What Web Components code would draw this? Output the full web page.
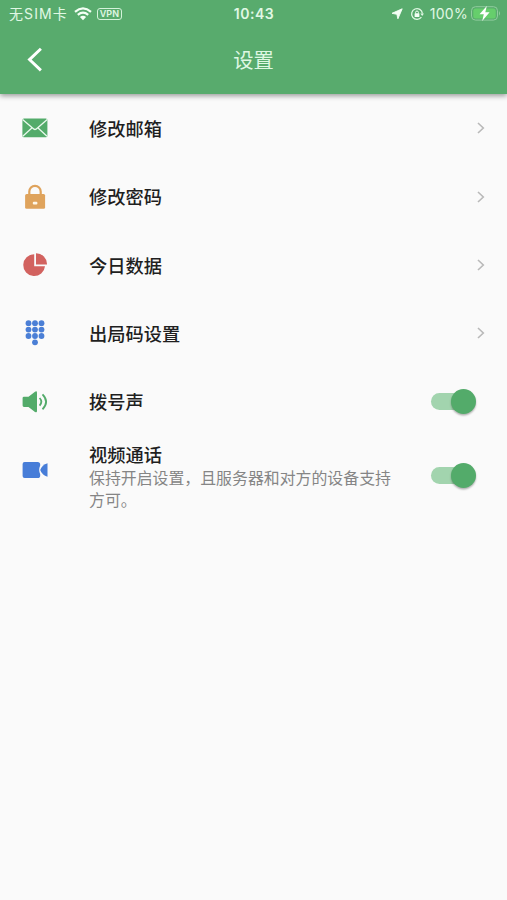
<!DOCTYPE html>
<html lang="zh-CN">
<head>
<meta charset="UTF-8">
<meta name="viewport" content="width=device-width, initial-scale=1">
<title>设置</title>
<style>
    body {
        margin: 0;
        background: #fafafa;
        font-family: Inter, "Noto Sans CJK SC", sans-serif;
    }
</style>
</head>
<body>
<settings-page>
    <status-bar slot="header" carrier="无SIM卡" time="10:43" battery="100%"></status-bar>
    <app-bar slot="header">设置</app-bar>

    <setting-item icon="mail">修改邮箱<nav-arrow slot="action"></nav-arrow></setting-item>
    <setting-item icon="lock">修改密码<nav-arrow slot="action"></nav-arrow></setting-item>
    <setting-item icon="pie">今日数据<nav-arrow slot="action"></nav-arrow></setting-item>
    <setting-item icon="dialpad">出局码设置<nav-arrow slot="action"></nav-arrow></setting-item>
    <setting-item icon="volume">拨号声<toggle-switch slot="action" checked></toggle-switch></setting-item>
    <setting-item icon="video" tall>视频通话<span slot="subtitle">保持开启设置，且服务器和对方的设备支持方可。</span><toggle-switch slot="action" checked></toggle-switch></setting-item>
</settings-page>

<script>
    const ICONS = {
        mail: `<rect x=".4" y="3.600" width="25" height="18.600" rx="1.500" fill="#53ab6a"/>
               <path d="M.6 4.600L10.800 13.200Q13 15.800 15.200 13.200L25.200 4.600M.8 21.200l9.300-8.400M25 21.200l-9.200-8.400" fill="none" stroke="#e9f8ec" stroke-width="1.300"/>`,
        lock: `<path d="M7.300 11.500V7.600a5.700 5.800 0 0 1 11.400 0v3.900" fill="none" stroke="#dfa35c" stroke-width="2.200"/>
               <rect x="3.100" y="10" width="20" height="14.700" rx="1.500" fill="#dfa35c"/>
               <rect x="10.800" y="17.800" width="4.600" height="2.800" rx="1" fill="#fff7e8"/>`,
        pie: `<path d="M12.200 2.300A10.900 10.900 0 1 0 23 14.200H12.200z" fill="#d2625f"/>
              <path d="M14 1.300V12.400H25A10.800 10.800 0 0 0 14 1.300z" fill="#d2625f"/>`,
        dialpad: `<g fill="#4b7fd6">${[6.500, 13, 19.500].map(x =>
                [3.200, 9.600, 16].map(y => `<circle cx="${x}" cy="${y}" r="2.900"/>`).join("")).join("")}
                <circle cx="13" cy="22.300" r="2.900"/></g>`,
        volume: `<path d="M2 7.700h4.500l6.500-5q2-1.200 2 1v18.200q0 2.200-2 1l-6.500-5H2Q.6 17.900.6 16.500V9.100Q.6 7.700 2 7.700z" fill="#53ab6a"/>
                 <path d="M17.600 9q3.500 3.800 0 7.600M20.500 5.300q7.200 7.500 0 15" fill="none" stroke="#53ab6a" stroke-width="1.800"/>`,
        video: `<path d="M2.600 4.900H15.600Q18.200 4.900 18.200 7.500V8.500Q16.200 12.900 18.200 17.300V18.400Q18.200 21 15.600 21H2.600Q.6 21 .6 19V6.900Q.6 4.900 2.600 4.900z" fill="#477dd8"/>
                <path d="M25.500 6.200v13.600Q20 18.200 18.200 13 20 7.800 25.500 6.200z" fill="#477dd8"/>`
    };

    class SettingsPage extends HTMLElement {
        constructor() {
            super();
            this.attachShadow({ mode: "open" });
            this.shadowRoot.innerHTML = `
                <style>
                    :host { display: flex; flex-direction: column; min-height: 100vh; }
                    header {
                        height: 94px;
                        display: flex;
                        flex-direction: column;
                        background: #58ab6d;
                        box-shadow: 0 2px 5px rgba(0, 0, 0, 0.38);
                    }
                    main { display: flex; flex-direction: column; }
                </style>
                <header><slot name="header"></slot></header>
                <main><slot></slot></main>
            `;
        }
    }

    class StatusBar extends HTMLElement {
        constructor() {
            super();
            this.attachShadow({ mode: "open" });
        }

        connectedCallback() {
            this.shadowRoot.innerHTML = `
                <style>
                    :host {
                        display: grid;
                        grid-template-columns: 1fr auto 1fr;
                        align-items: center;
                        height: 27px;
                        padding: 0 6px 0 9px;
                        color: #e0f8e4;
                        font-size: 14px;
                        line-height: 20px;
                    }
                    div { display: flex; align-items: center; }
                    svg { display: block; flex: none; }
                    .carrier { letter-spacing: 1.1px; margin-right: 6px; white-space: nowrap; }
                    .vpn {
                        box-sizing: border-box;
                        width: 25px;
                        height: 12px;
                        margin-left: 5px;
                        border: 1px solid #d4f3da;
                        border-radius: 3px;
                        font-size: 9px;
                        font-weight: 600;
                        line-height: 10px;
                        text-align: center;
                    }
                    .time { margin-right: 2px; font-weight: 600; letter-spacing: 0.5px; }
                    .right { justify-content: flex-end; }
                    .battery { margin: 0 3px 0 6px; letter-spacing: 0.3px; }
                </style>
                <div>
                    <span class="carrier">${this.getAttribute("carrier")}</span>
                    <svg width="18" height="14" viewBox="0 0 18 14">
                        <path d="M1 4.800Q9-2 17 4.800M3.800 7.800q5.200-4.300 10.400 0" fill="none" stroke="#f4fff5" stroke-width="2.200"/>
                        <path d="M5.900 10q3.100-2.500 6.200 0L9 13.200z" fill="#f4fff5"/>
                    </svg>
                    <span class="vpn">VPN</span>
                </div>
                <span class="time">${this.getAttribute("time")}</span>
                <div class="right">
                    <svg width="12" height="12" viewBox="0 0 12 12"><path d="M11.200.8L6.900 10.800 5.900 6.300 1 5.300z" fill="#f4fff5" stroke="#f4fff5" stroke-width=".9" stroke-linejoin="round"/></svg>
                    <svg width="14" height="14" viewBox="0 0 14 14" style="margin-left:7px">
                        <path d="M11.400 10.200A5.400 5.400 0 1 1 12.400 6.500" fill="none" stroke="#e0f8e4" stroke-width="1.300"/>
                        <path d="M10.300 6.500h3.700l-1.800 2.500z" fill="#e0f8e4"/>
                        <rect x="4.600" y="6.300" width="4.800" height="3.700" rx=".5" fill="#f4fff5"/>
                        <path d="M5.600 6.500V5.400a1.400 1.400 0 0 1 2.800 0v1.100" fill="none" stroke="#f4fff5"/>
                    </svg>
                    <span class="battery">${this.getAttribute("battery")}</span>
                    <svg width="30" height="15" viewBox="0 0 30 15">
                        <rect x=".5" y=".7" width="26" height="13.400" rx="4" fill="none" stroke="#91cc9e"/>
                        <rect x="2.300" y="2.400" width="22.400" height="10" rx="2.500" fill="#66ce6c"/>
                        <path d="M28 5q2 2.400 0 4.800z" fill="#91cc9e"/>
                        <path d="M15.800 0L8.500 8.200h4.300L11.200 15l7.400-8.700h-4.300z" fill="#fff"/>
                    </svg>
                </div>
            `;
        }
    }

    class AppBar extends HTMLElement {
        constructor() {
            super();
            this.attachShadow({ mode: "open" });
            this.shadowRoot.innerHTML = `
                <style>
                    :host {
                        display: grid;
                        grid-template-columns: 70px 1fr 70px;
                        align-items: center;
                        height: 66px;
                        color: #dff7e3;
                        font-size: 20.3px;
                        line-height: 30px;
                        text-align: center;
                    }
                    svg { display: block; margin-left: 26px; }
                    span { padding-top: 2px; }
                </style>
                <svg width="18" height="26" viewBox="0 0 18 26"><path d="M14.900 1.700L3.500 12.600l11.400 10.800" fill="none" stroke="#fff" stroke-width="2.900"/></svg>
                <span><slot></slot></span>
            `;
        }
    }

    class SettingItem extends HTMLElement {
        constructor() {
            super();
            this.attachShadow({ mode: "open" });
        }

        connectedCallback() {
            this.shadowRoot.innerHTML = `
                <style>
                    :host {
                        display: grid;
                        grid-template-columns: 67px 1fr auto;
                        align-items: center;
                        box-sizing: border-box;
                        height: 68.4px;
                        padding: 0 22px;
                    }
                    :host([tall]) { height: 80px; }
                    :host([tall]) svg { align-self: start; margin-top: 21px; }
                    :host([tall]) .text { padding-top: 2px; }
                    svg { display: block; }
                    .text { padding-top: 1.4px; }
                    .title {
                        color: #1f1f1f;
                        font-size: 18.250px;
                        font-weight: 500;
                        line-height: 26px;
                    }
                    .subtitle {
                        width: 310px;
                        color: #858585;
                        font-size: 15.900px;
                        line-height: 22px;
                    }
                    ::slotted(toggle-switch) { margin-right: 8px; }
                </style>
                <svg width="26" height="26" viewBox="0 0 26 26">${ICONS[this.getAttribute("icon")]}</svg>
                <div class="text">
                    <div class="title"><slot></slot></div>
                    <div class="subtitle"><slot name="subtitle"></slot></div>
                </div>
                <slot name="action"></slot>
            `;
        }
    }

    class NavArrow extends HTMLElement {
        constructor() {
            super();
            this.attachShadow({ mode: "open" });
            this.shadowRoot.innerHTML = `
                <style>
                    :host { display: block; }
                    svg { display: block; }
                </style>
                <svg width="9" height="14" viewBox="0 0 9 14"><path d="M2 2l5.300 5L2 12" fill="none" stroke="#b9b9b9" stroke-width="1.600"/></svg>
            `;
        }
    }

    class ToggleSwitch extends HTMLElement {
        constructor() {
            super();
            this.attachShadow({ mode: "open" });
            this.shadowRoot.innerHTML = `
                <style>
                    :host {
                        display: flex;
                        align-items: center;
                        width: 46px;
                        height: 26px;
                        cursor: pointer;
                    }
                    .track {
                        display: flex;
                        align-items: center;
                        width: 42px;
                        height: 17px;
                        border-radius: 9px;
                        background: #c4c4c4;
                    }
                    .thumb {
                        flex: none;
                        width: 25px;
                        height: 25px;
                        border-radius: 50%;
                        background: #fff;
                        box-shadow: 0 1.500px 2px rgba(0, 0, 0, 0.3);
                    }
                    :host([checked]) .track { background: #a2d4ae; }
                    :host([checked]) .thumb { margin-left: 19.500px; background: #53ab6a; }
                </style>
                <div class="track"><div class="thumb"></div></div>
            `;
            this.addEventListener("click", () => this.toggleAttribute("checked"));
        }
    }

    customElements.define("settings-page", SettingsPage);
    customElements.define("status-bar", StatusBar);
    customElements.define("app-bar", AppBar);
    customElements.define("setting-item", SettingItem);
    customElements.define("nav-arrow", NavArrow);
    customElements.define("toggle-switch", ToggleSwitch);
</script>
</body>
</html>
